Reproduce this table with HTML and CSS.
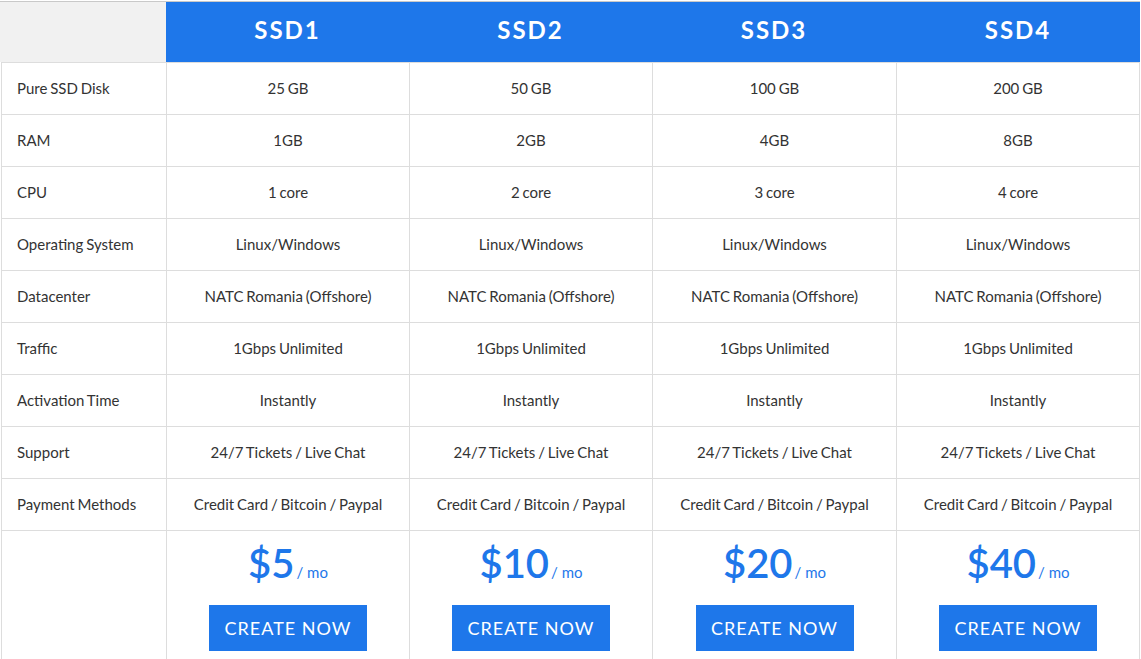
FILE: index.html
```html
<!DOCTYPE html>
<html lang="en">
<head>
<meta charset="utf-8">
<title>SSD Plans</title>
<link rel="stylesheet" href="styles.css">
</head>
<body>
<div class="pricing">
  <div class="head">
    <div class="head-blank"></div>
    <div class="head-plan">SSD1</div>
    <div class="head-plan">SSD2</div>
    <div class="head-plan">SSD3</div>
    <div class="head-plan">SSD4</div>
  </div>
  <div class="rows">
    <div class="row">
      <div class="cell label">Pure SSD Disk</div>
      <div class="cell">25 GB</div><div class="cell">50 GB</div><div class="cell">100 GB</div><div class="cell">200 GB</div>
    </div>
    <div class="row">
      <div class="cell label">RAM</div>
      <div class="cell">1GB</div><div class="cell">2GB</div><div class="cell">4GB</div><div class="cell">8GB</div>
    </div>
    <div class="row">
      <div class="cell label">CPU</div>
      <div class="cell">1 core</div><div class="cell">2 core</div><div class="cell">3 core</div><div class="cell">4 core</div>
    </div>
    <div class="row">
      <div class="cell label">Operating System</div>
      <div class="cell">Linux/Windows</div><div class="cell">Linux/Windows</div><div class="cell">Linux/Windows</div><div class="cell">Linux/Windows</div>
    </div>
    <div class="row">
      <div class="cell label">Datacenter</div>
      <div class="cell">NATC Romania (Offshore)</div><div class="cell">NATC Romania (Offshore)</div><div class="cell">NATC Romania (Offshore)</div><div class="cell">NATC Romania (Offshore)</div>
    </div>
    <div class="row">
      <div class="cell label">Traffic</div>
      <div class="cell">1Gbps Unlimited</div><div class="cell">1Gbps Unlimited</div><div class="cell">1Gbps Unlimited</div><div class="cell">1Gbps Unlimited</div>
    </div>
    <div class="row">
      <div class="cell label">Activation Time</div>
      <div class="cell">Instantly</div><div class="cell">Instantly</div><div class="cell">Instantly</div><div class="cell">Instantly</div>
    </div>
    <div class="row">
      <div class="cell label">Support</div>
      <div class="cell">24/7 Tickets / Live Chat</div><div class="cell">24/7 Tickets / Live Chat</div><div class="cell">24/7 Tickets / Live Chat</div><div class="cell">24/7 Tickets / Live Chat</div>
    </div>
    <div class="row">
      <div class="cell label">Payment Methods</div>
      <div class="cell">Credit Card / Bitcoin / Paypal</div><div class="cell">Credit Card / Bitcoin / Paypal</div><div class="cell">Credit Card / Bitcoin / Paypal</div><div class="cell">Credit Card / Bitcoin / Paypal</div>
    </div>
    <div class="row price-row">
      <div class="cell label"></div>
      <div class="cell price-cell"><div class="price"><span class="amount">$5</span><span class="per">/ mo</span></div><a class="btn" href="#">Create Now</a></div>
      <div class="cell price-cell"><div class="price"><span class="amount">$10</span><span class="per">/ mo</span></div><a class="btn" href="#">Create Now</a></div>
      <div class="cell price-cell"><div class="price"><span class="amount">$20</span><span class="per">/ mo</span></div><a class="btn" href="#">Create Now</a></div>
      <div class="cell price-cell"><div class="price"><span class="amount">$40</span><span class="per">/ mo</span></div><a class="btn" href="#">Create Now</a></div>
    </div>
  </div>
</div>
</body>
</html>
```
FILE: styles.css
```css
* { box-sizing: border-box; }
html, body { margin: 0; padding: 0; background: #fff; }
body {
  padding-top: 1px;
  font-family: Lato, "Open Sans", Arial, sans-serif;
  color: #333;
  overflow: hidden;
}
.pricing {
  width: 1140px;
  border-top: 1px solid #c9c9c9;
}
.head {
  display: grid;
  grid-template-columns: 166px 243px 243px 244px 244px;
  height: 60px;
}
.head-blank { background: #f1f1f1; }
.head-plan {
  background: #1e77ea;
  color: #fff;
  font-weight: 700;
  font-size: 24px;
  letter-spacing: 2px;
  display: flex;
  align-items: center;
  justify-content: center;
  padding-bottom: 6px;
}
.rows {
  margin-left: 1px;
  border-left: 1px solid #dddddd;
  border-top: 1px solid #dddddd;
  width: 1139px;
}
.row {
  display: grid;
  grid-template-columns: 165px 243px 243px 244px 243px;
}
.cell {
  height: 52px;
  border-right: 1px solid #dddddd;
  border-bottom: 1px solid #dddddd;
  display: flex;
  align-items: center;
  justify-content: center;
  font-size: 15px;
  word-spacing: -1px;
  padding-bottom: 2px;
}
.cell.label {
  justify-content: flex-start;
  padding-left: 15px;
}
.price-row .cell {
  height: 140px;
  border-bottom: none;
}
.price-cell {
  flex-direction: column;
  justify-content: flex-start !important;
  padding-top: 8px;
}
.price {
  color: #1e77ea;
  display: flex;
  align-items: baseline;
  line-height: 48px;
  word-spacing: 0;
}
.amount { font-size: 40px; font-weight: 600; }
.per { font-size: 15px; margin-left: 2px; }
.btn {
  margin-top: 9px;
  width: 158px;
  height: 46px;
  background: #1e77ea;
  color: #fff;
  text-decoration: none;
  text-transform: uppercase;
  font-size: 18px;
  letter-spacing: 1px;
  word-spacing: 0;
  display: flex;
  align-items: center;
  justify-content: center;
}
```
